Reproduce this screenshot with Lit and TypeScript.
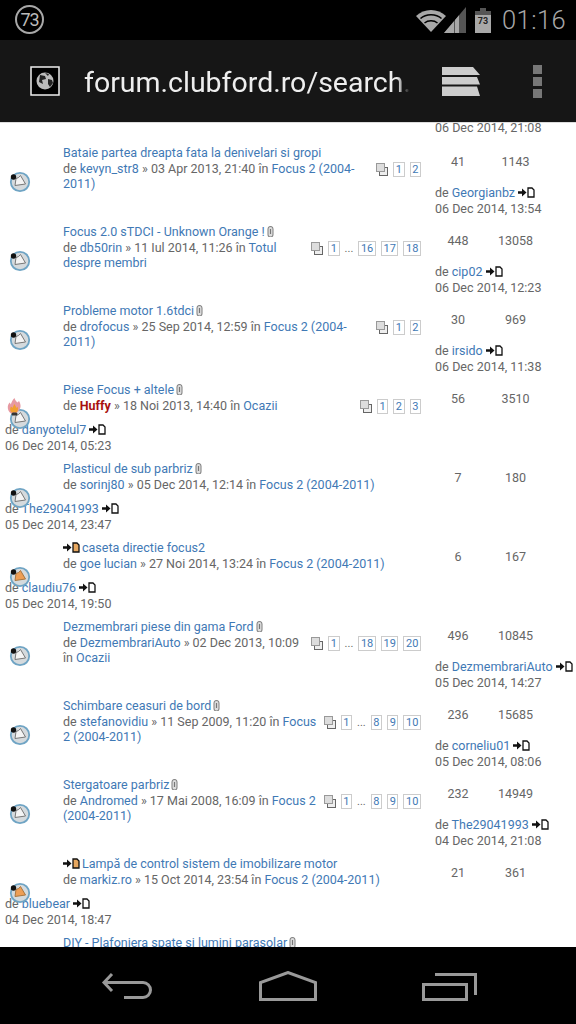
import { LitElement, html, css, svg } from "lit";
import { customElement } from "lit/decorators.js";

type Row = {
  t: string; clip?: boolean; arrow?: boolean; by: string; hot?: boolean; d: string; f: string;
  p?: (string)[]; r: string; v: string; lb: string; ld: string; left?: boolean; orange?: boolean; flame?: boolean;
};

const F = "Focus 2 (2004-2011)";
const rows: Row[] = [
  { t: "Bataie partea dreapta fata la denivelari si gropi", by: "kevyn_str8", d: "03 Apr 2013, 21:40", f: F, p: ["1", "2"], r: "41", v: "1143", lb: "Georgianbz", ld: "06 Dec 2014, 13:54" },
  { t: "Focus 2.0 sTDCI - Unknown Orange !", clip: true, by: "db50rin", d: "11 Iul 2014, 11:26", f: "Totul despre membri", p: ["1", "...", "16", "17", "18"], r: "448", v: "13058", lb: "cip02", ld: "06 Dec 2014, 12:23" },
  { t: "Probleme motor 1.6tdci", clip: true, by: "drofocus", d: "25 Sep 2014, 12:59", f: F, p: ["1", "2"], r: "30", v: "969", lb: "irsido", ld: "06 Dec 2014, 11:38" },
  { t: "Piese Focus + altele", clip: true, by: "Huffy", hot: true, d: "18 Noi 2013, 14:40", f: "Ocazii", p: ["1", "2", "3"], r: "56", v: "3510", lb: "danyotelul7", ld: "06 Dec 2014, 05:23", left: true, flame: true },
  { t: "Plasticul de sub parbriz", clip: true, by: "sorinj80", d: "05 Dec 2014, 12:14", f: F, r: "7", v: "180", lb: "The29041993", ld: "05 Dec 2014, 23:47", left: true },
  { t: "caseta directie focus2", arrow: true, by: "goe lucian", d: "27 Noi 2014, 13:24", f: F, r: "6", v: "167", lb: "claudiu76", ld: "05 Dec 2014, 19:50", left: true, orange: true },
  { t: "Dezmembrari piese din gama Ford", clip: true, by: "DezmembrariAuto", d: "02 Dec 2013, 10:09", f: "Ocazii", p: ["1", "...", "18", "19", "20"], r: "496", v: "10845", lb: "DezmembrariAuto", ld: "05 Dec 2014, 14:27" },
  { t: "Schimbare ceasuri de bord", clip: true, by: "stefanovidiu", d: "11 Sep 2009, 11:20", f: F, p: ["1", "...", "8", "9", "10"], r: "236", v: "15685", lb: "corneliu01", ld: "05 Dec 2014, 08:06" },
  { t: "Stergatoare parbriz", clip: true, by: "Andromed", d: "17 Mai 2008, 16:09", f: F, p: ["1", "...", "8", "9", "10"], r: "232", v: "14949", lb: "The29041993", ld: "04 Dec 2014, 21:08" },
  { t: "Lampă de control sistem de imobilizare motor", arrow: true, by: "markiz.ro", d: "15 Oct 2014, 23:54", f: F, r: "21", v: "361", lb: "bluebear", ld: "04 Dec 2014, 18:47", left: true, orange: true },
  { t: "DIY - Plafoniera spate si lumini parasolar", clip: true, by: "", d: "", f: "", r: "", v: "", lb: "", ld: "" },
];

const clip = html`<svg class="clip" width="7" height="11" viewBox="0 0 7 11"><path d="M1 3a2.500 2.500 0 0 1 5 0v5.500a2.500 2.500 0 0 1-5 0z" fill="#ddd" stroke="#888" stroke-width="1.100"/><path d="M3.500 3v5" stroke="#777" stroke-width="1.200"/></svg>`;

const arrowDoc = (fill: string) => html`<svg class="arrow" width="17" height="11" viewBox="0 0 17 11"><path d="M0 4.200h4V1.500L8.500 5.500 4 9.500V6.800H0z" fill="#111"/><path d="M10 1h4l2 2v7h-6z" fill="${fill}" stroke="#111" stroke-width="1.300"/></svg>`;

const copyIcon = html`<svg class="copy" width="12" height="13" viewBox="0 0 12 13"><rect x="3.500" y="4.500" width="8" height="8" fill="#eee" stroke="#666"/><rect x=".5" y=".5" width="8" height="8" fill="#ddd" stroke="#999"/></svg>`;

const topicIcon = (orange?: boolean, flame?: boolean) => html`<svg class="ticon" width="24" height="24" viewBox="0 0 24 24">
  <circle cx="12" cy="12" r="9.200" fill="#d5dadd" stroke="#6fa4c4" stroke-width="1.800"/>
  <path d="M8 8.500Q11 8 12.500 5.500L17.500 14 7 15.500z" fill="${orange ? "#ee9e55" : "#f4f4f4"}" stroke="${orange ? "#a9763f" : "#777"}" stroke-width="1"/>
  ${flame ? svg`<path d="M3 6.500C.5 4.500-.5 2-.2-.5-.1-2 .8-3.500 1.800-4.500l1 2C3.300-4.500 4.500-7 6.500-9 7-6.500 8.500-5.500 9.500-4.500c.5-.5 1-.8 1.500-1.500 1.500 2.500 2.500 6 .2 9-.5 1-1.500 2-2.700 3z" fill="#e79aa2"/><path d="M3.500 5.500C1.800 4 1.800 1.500 3-.5 3.700.2 4 .5 4.500 1 5-.5 6-2 6.500-3c.5 1.500 1.500 2.500 2 4 .8-.5 1-.8 1.200-1.200.8 2.200.3 4.200-1.200 5.700z" fill="#f0a030"/><rect x="3.500" y="5.500" width="6" height="3" rx="1.500" fill="#333"/>`
        : svg`<circle cx="5.500" cy="7" r="2.700" fill="#111"/>`}
</svg>`;

@customElement("app-root")
export class AppRoot extends LitElement {
  static styles = css`
    :host { display: block; width: 576px; height: 1024px; overflow: hidden; font-family: Roboto, "Liberation Sans", sans-serif; }
    .screen { display: grid; grid-template-rows: 40px 83px 824px 77px; height: 1024px; background: #fff; }
    .status { background: #000; display: flex; align-items: center; padding: 0 10px 0 15px; color: #a8a8a8; }
    .badge { width: 25px; height: 25px; border: 2px solid #a8a8a8; border-radius: 50%; display: flex; align-items: center; justify-content: center; font-size: 18px; letter-spacing: -1px; margin-top: -1px; color: #bbb; }
    .sys { display: flex; align-items: center; margin-left: auto; }
    .sys svg { display: block; }
    .time { font-size: 25.500px; font-weight: 300; margin-left: 11px; letter-spacing: .4px; }
    .bar { background: #161616; border-bottom: 1px solid #ddd; box-sizing: border-box; display: flex; align-items: center; padding: 0 34px 0 30px; }
    .fav { display: block; flex: none; }
    .url { color: #eee; font-size: 28.500px; width: 326px; margin: 2px 0 0 24px; white-space: nowrap; overflow: hidden;
           -webkit-mask-image: linear-gradient(to right, #000 96%, transparent); mask-image: linear-gradient(to right, #000 96%, transparent); }
    .tabs { margin-left: 32px; display: block; flex: none; }
    .menu { margin-left: auto; display: flex; flex-direction: column; gap: 3px; }
    .menu i { display: block; width: 9px; height: 9px; background: #777; }
    .content { overflow: hidden; font-size: 12.500px; line-height: 15.600px; color: #666; }
    .stub { height: 22px; box-sizing: border-box; padding: 0 0 9px 435px; display: flex; flex-direction: column; justify-content: flex-end; overflow: hidden; white-space: nowrap; }
    .row { display: grid; grid-template-columns: 63px 358px 155px; grid-template-rows: 40px 39px; height: 79px; }
    .main { grid-column: 2; grid-row: 1 / span 2; }
    .icon { grid-column: 1; grid-row: 1 / span 2; margin: 25px 0 0 8px; width: 24px; height: 24px; z-index: 1; }
    .ticon { display: block; overflow: visible; }
    a { color: #3f79b5; text-decoration: none; }
    .clip, .arrow { vertical-align: -1px; }
    .clip { margin-left: 2px; }
    .arrow { margin-right: 2px; }
    .pages { float: right; display: flex; align-items: center; gap: 5px; margin-top: 1.400px; margin-left: 6px; }
    .pg { border: 1px solid #ccc; height: 13px; line-height: 13px; padding: 0 1.600px; font-size: 11px; color: #3f79b5; }
    .dots { font-size: 11px; }
    .hot { color: #a80f0f; font-weight: 700; }
    .stats { grid-column: 3; grid-row: 1; display: flex; padding: 9px 0 0 14px; }
    .stats span { text-align: center; }
    .stats .a { width: 46px; }
    .stats .b { width: 69px; }
    .last { grid-column: 3; grid-row: 2; padding-left: 14px; white-space: nowrap; }
    .last.left { grid-column: 1 / span 2; padding-left: 5px; }
    .nav { background: #000; display: flex; align-items: flex-start; padding: 24px 0 0 100px; }
    .nav svg { display: block; flex: none; }
    .home { margin-left: 103px; }
    .recent { margin-left: 105px; margin-top: 2px; }
    .gap-s { margin-left: -2px; }
    .gap-b { margin-left: 9px; }
  `;

  renderRow(r: Row) {
    return html`<div class="row">
      <div class="main">
        <div class="title">${r.arrow ? arrowDoc("#e8a860") : ""}<a>${r.t}</a>${r.clip ? clip : ""}</div>
        ${r.p ? html`<div class="pages">${copyIcon}${r.p.map((x) => x === "..." ? html`<span class="dots">...</span>` : html`<a class="pg">${x}</a>`)}</div>` : ""}
        ${r.by ? html`<div>de <a class="${r.hot ? "hot" : ""}">${r.by}</a> » ${r.d} în <a>${r.f}</a></div>` : ""}
      </div>
      ${r.by ? html`<div class="icon">${topicIcon(r.orange, r.flame)}</div>
      <div class="stats"><span class="a">${r.r}</span><span class="b">${r.v}</span></div>
      <div class="last ${r.left ? "left" : ""}">de <a>${r.lb}</a> ${arrowDoc("#fff")}<br />${r.ld}</div>` : ""}
    </div>`;
  }

  render() {
    return html`<div class="screen">
      <div class="status">
        <div class="badge">73</div>
        <div class="sys">
          <svg width="30" height="24" viewBox="0 0 30 24"><path d="M0 8C8 0 22 0 30 8L15 24z" fill="#a8a8a8"/><path d="M4.500 10.500C10 5.500 20 5.500 25.500 10.500" fill="none" stroke="#000" stroke-width="1.500"/><path d="M8.500 15C12 12 18 12 21.500 15" fill="none" stroke="#000" stroke-width="1.500"/></svg>
          <svg class="gap-s" width="22" height="26" viewBox="0 0 22 26"><path d="M0 26L22 0v26z" fill="#555"/><path d="M0 26l10-11.800V26zM11 13v13h4V8.300l-4 4.700z" fill="#a8a8a8"/></svg>
          <svg class="gap-b" width="16" height="25" viewBox="0 0 16 25"><path d="M5 0h6v3H5z" fill="#555"/><path d="M0 3h16v4H0z" fill="#555"/><path d="M0 7h16v18H0z" fill="#a8a8a8"/><text x="8" y="16" text-anchor="middle" font-family="Roboto" font-size="9" font-weight="700" fill="#222">73</text></svg>
          <span class="time">01:16</span>
        </div>
      </div>
      <div class="bar">
        <svg class="fav" width="30" height="30" viewBox="0 0 30 30"><rect x="1" y="1" width="28" height="28" fill="#000" stroke="#eee" stroke-width="1.500"/><circle cx="15" cy="15" r="8.500" fill="#bbb"/><path d="M10 9l5 1 1 3-4 1 1 4-4-2zM18 13l4 1 1 3-3 4-2-3zM15 7l4 1-1 2z" fill="#222"/></svg>
        <div class="url">forum.clubford.ro/search.php</div>
        <svg class="tabs" width="38" height="29" viewBox="0 0 38 29"><path d="M0 0h31l7 8H0z" fill="#ccc"/><path d="M0 10h35l3 7.500H0z" fill="#ccc"/><path d="M0 19.500h35l3 9.500H0z" fill="#ccc"/></svg>
        <div class="menu"><i></i><i></i><i></i></div>
      </div>
      <div class="content">
        <div class="stub">06 Dec 2014, 21:08</div>
        ${rows.map((r) => this.renderRow(r))}
      </div>
      <div class="nav">
        <svg width="56" height="30" viewBox="0 0 56 30" fill="none" stroke="#999" stroke-width="3"><path d="M12 3L4 11.500l8 8.500M4 11.500h39a7.500 7.500 0 0 1 0 15H24"/></svg>
        <svg class="home" width="58" height="30" viewBox="0 0 58 30" fill="none" stroke="#999" stroke-width="3"><path d="M1.500 28.500V11.500L29 1.500l27.500 10v17z"/></svg>
        <svg class="recent" width="55" height="28" viewBox="0 0 55 28" fill="none" stroke="#999" stroke-width="3"><path d="M1.500 11.500h43v15h-43z"/><path d="M13 1.500h40.500V22"/></svg>
      </div>
    </div>`;
  }
}
